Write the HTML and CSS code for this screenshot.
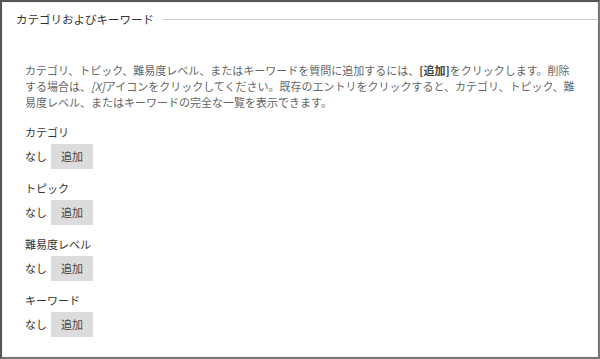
FILE: index.html
```html
<!DOCTYPE html>
<html>
<head>
    <meta name="viewport" content="width=device-width, initial-scale=1.0">
    <link rel="stylesheet" href="styles.css">
</head>
<body>
    <div class="frame">
        <div class="panel">
            <div class="legend">
                <span class="legend-text">カテゴリおよびキーワード</span>
                <span class="legend-line"></span>
            </div>
            <p class="help">カテゴリ、トピック、難易度レベル、またはキーワードを質問に追加するには、<b>[追加]</b>をクリックします。削除する場合は、<i>[X]</i>アイコンをクリックしてください。既存のエントリをクリックすると、カテゴリ、トピック、難易度レベル、またはキーワードの完全な一覧を表示できます。</p>

            <div class="group">
                <div class="group-label">カテゴリ</div>
                <div class="group-row"><span>なし</span><button class="add-btn">追加</button></div>
            </div>
            <div class="group">
                <div class="group-label">トピック</div>
                <div class="group-row"><span>なし</span><button class="add-btn">追加</button></div>
            </div>
            <div class="group">
                <div class="group-label">難易度レベル</div>
                <div class="group-row"><span>なし</span><button class="add-btn">追加</button></div>
            </div>
            <div class="group">
                <div class="group-label">キーワード</div>
                <div class="group-row"><span>なし</span><button class="add-btn">追加</button></div>
            </div>
        </div>
    </div>
</body>
</html>
```

FILE: styles.css
```css
body {
    margin: 0;
    background: #fff;
    font-family: "Noto Sans CJK JP", "Noto Sans", sans-serif;
    color: #333;
}
.frame {
    height: 359px;
    box-sizing: border-box;
    border: 2px solid #777;
    border-top-color: #555;
    border-left-color: #555;
}
.panel {
    height: 100%;
    box-sizing: border-box;
    border: 1px solid #f0f0f0;
    padding: 8px 0 0 22px;
}
.legend {
    display: flex;
    align-items: center;
    margin-left: -9px;
    height: 16px;
}
.legend-text {
    font-size: 11.5px;
    line-height: 16px;
    color: #333;
}
.legend-line {
    flex: 1;
    height: 1px;
    background: #ccc;
    margin-left: 9px;
}
.help {
    margin: 34.5px 0 14px 0;
    width: 553px;
    font-size: 11px;
    line-height: 16px;
    color: #666;
}
.help b {
    color: #444;
}
.help i {
    font-style: italic;
}
.group {
    margin-bottom: 11px;
}
.group-label {
    font-size: 11px;
    line-height: 16px;
    margin-bottom: 4px;
    color: #333;
}
.group-row {
    display: flex;
    align-items: center;
    font-size: 11px;
    color: #333;
}
.add-btn {
    margin-left: 4px;
    width: 42px;
    height: 25px;
    border: none;
    background: #dcdcdc;
    color: #444;
    font-family: inherit;
    font-size: 11px;
    padding: 0;
}
```
